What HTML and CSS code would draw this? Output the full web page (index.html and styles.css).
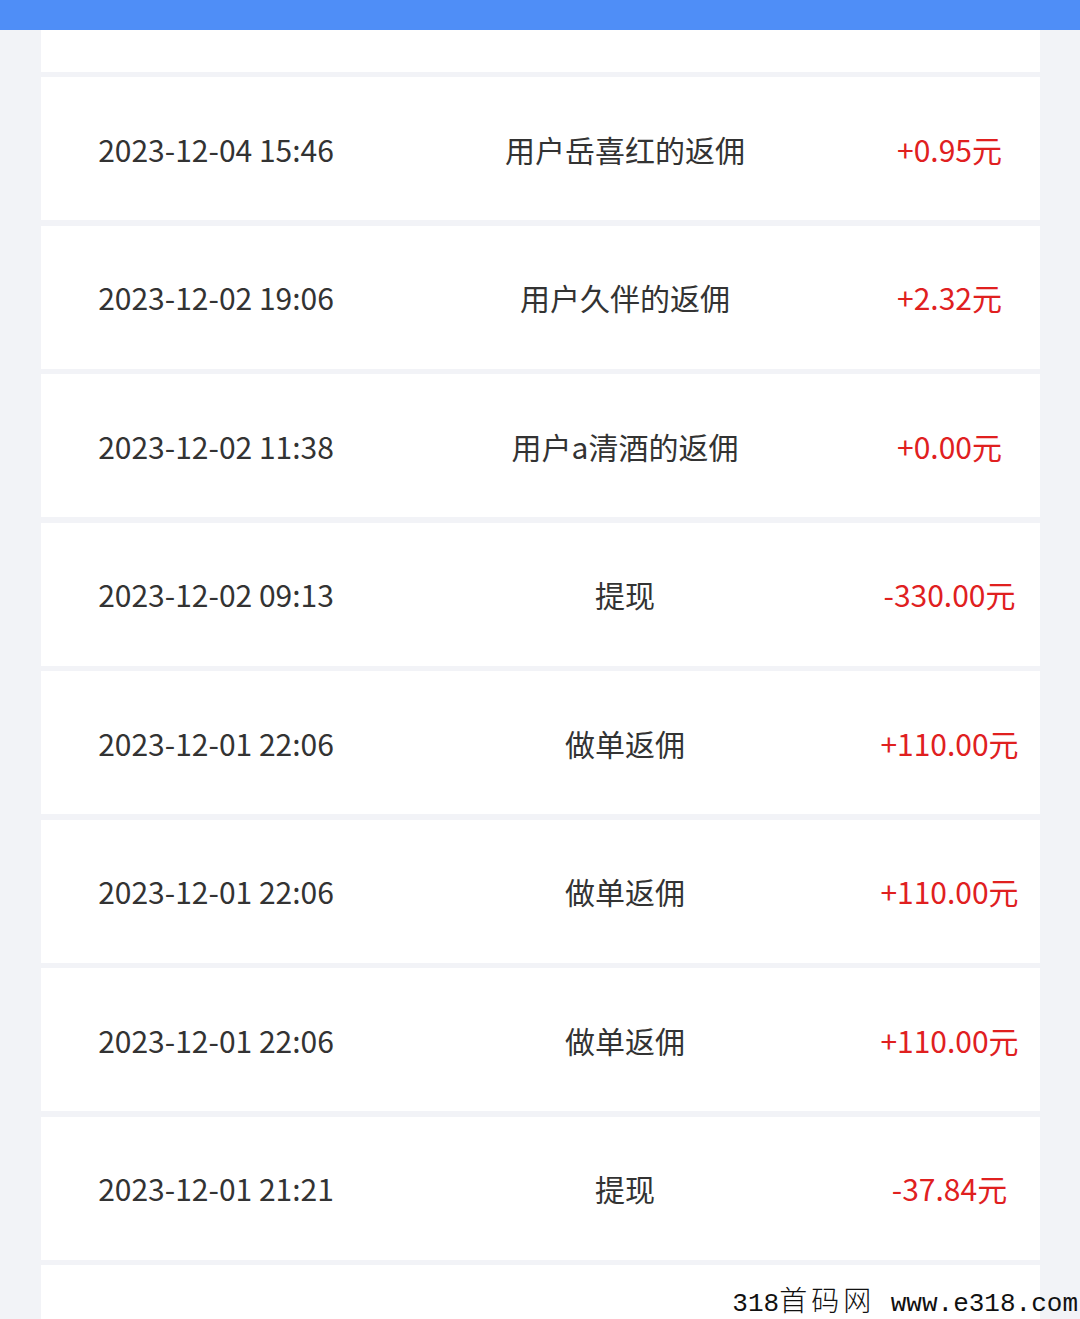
FILE: index.html
```html
<!DOCTYPE html>
<html lang="zh-CN">
<head>
<meta charset="utf-8">
<title>返佣记录</title>
<link rel="stylesheet" href="styles.css">
</head>
<body>
<div class="topbar"></div>
<div class="list">
  <div class="card card-partial"></div>
  <div class="card row"><span class="date">2023-12-04 15:46</span><span class="desc">用户岳喜红的返佣</span><span class="amount">+0.95元</span></div>
  <div class="card row"><span class="date">2023-12-02 19:06</span><span class="desc">用户久伴的返佣</span><span class="amount">+2.32元</span></div>
  <div class="card row"><span class="date">2023-12-02 11:38</span><span class="desc">用户a清酒的返佣</span><span class="amount">+0.00元</span></div>
  <div class="card row"><span class="date">2023-12-02 09:13</span><span class="desc">提现</span><span class="amount">-330.00元</span></div>
  <div class="card row"><span class="date">2023-12-01 22:06</span><span class="desc">做单返佣</span><span class="amount">+110.00元</span></div>
  <div class="card row"><span class="date">2023-12-01 22:06</span><span class="desc">做单返佣</span><span class="amount">+110.00元</span></div>
  <div class="card row"><span class="date">2023-12-01 22:06</span><span class="desc">做单返佣</span><span class="amount">+110.00元</span></div>
  <div class="card row"><span class="date">2023-12-01 21:21</span><span class="desc">提现</span><span class="amount">-37.84元</span></div>
  <div class="card card-tail"></div>
</div>
<div class="watermark">318<span class="wm-cjk">首码网</span> www.e318.com</div>
</body>
</html>
```

FILE: styles.css
```css
html, body {
  margin: 0;
  padding: 0;
}
body {
  width: 1080px;
  height: 1319px;
  overflow: hidden;
  background: #f2f3f7;
  font-family: "Noto Sans CJK SC", "Noto Sans", sans-serif;
  position: relative;
}
.topbar {
  height: 30px;
  background: #4f8ef7;
}
.list {
  display: flex;
  flex-direction: column;
  gap: 5.5px;
  padding: 0 40px 0 41px;
}
.card {
  background: #ffffff;
  flex-shrink: 0;
}
.card-partial {
  height: 41.5px;
}
.card-tail {
  height: 54px;
}
.row {
  height: 143px;
  display: grid;
  grid-template-columns: 350px 468px 1fr;
  align-items: center;
  font-size: 30px;
  color: #333333;
  text-align: center;
}
.amount {
  color: #e0201f;
}
.watermark {
  position: absolute;
  right: 2px;
  bottom: 0;
  font-family: "Liberation Mono", "Noto Sans CJK SC", monospace;
  font-size: 26px;
  line-height: 30px;
  color: #111111;
  white-space: pre;
}
.wm-cjk {
  font-size: 28px;
  letter-spacing: 4px;
  font-weight: 300;
}
```
